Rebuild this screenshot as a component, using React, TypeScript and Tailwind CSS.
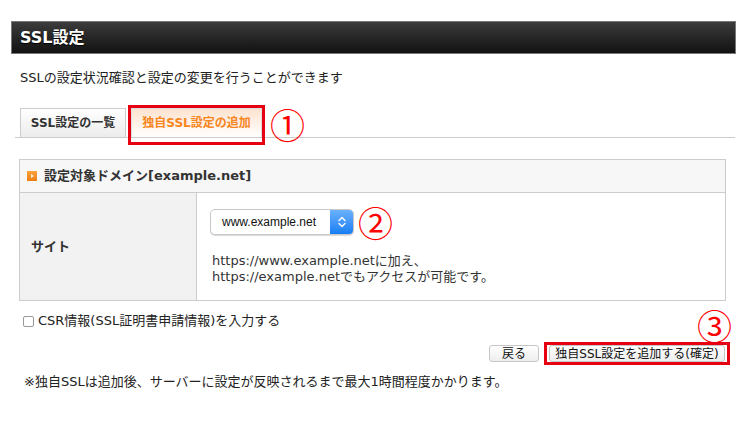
const body = "font-['DejaVu_Sans','Noto_Sans_CJK_JP',sans-serif]";
const circled = "font-['Noto_Sans_CJK_JP',sans-serif] text-[35px] font-normal leading-[32px] text-[#ff0000]";

export default function App() {
  return (
    <div className={`h-[435px] w-[750px] bg-white pt-[21px] text-[#333] ${body}`}>
      <div className="ml-[11px] flex h-[33px] w-[725px] items-center border border-[#777] bg-gradient-to-b from-[#3c3c3c] to-[#121212] pl-[8px]">
        <span className="text-[16px] font-bold text-white [text-shadow:0_1px_1px_#000]">
          SSL設定
        </span>
      </div>

      <p className="mt-[16px] pl-[20px] text-[13px] leading-[16px] text-[#222]">
        SSLの設定状況確認と設定の変更を行うことができます
      </p>

      <div className="mx-[15px] mt-[22px] flex h-[30px] items-end border-b border-[#ccc] pl-[5px]">
        <div className="flex h-[29px] w-[106px] items-center justify-center border border-b-0 border-[#ccc] bg-gradient-to-b from-white to-[#ececec] text-[12px] font-bold text-[#333]">
          SSL設定の一覧
        </div>
        <div className="relative ml-[5px] flex h-[29px] w-[131px] items-center justify-center border border-b-0 border-[#ddd] bg-gradient-to-b from-[#fde3cf] to-white text-[12px] font-bold text-[#f7861e]">
          独自SSL設定の追加
          <span className="absolute -bottom-[8px] -left-[4px] -right-[4px] -top-[4px] border-[3px] border-[#e60012]" />
        </div>
        <span className={`mb-[-2px] ml-[8px] self-center ${circled}`}>①</span>
      </div>

      <div className="ml-[19px] mt-[21px] w-[707px] border border-[#ccc]">
        <div className="flex h-[33px] items-center border-b border-[#ccc] bg-[#f7f7f7] pl-[7px]">
          <span className="mr-[7px] flex h-[10px] w-[10px] items-center justify-center bg-gradient-to-b from-[#fba33b] to-[#ef7d12]">
            <span className="ml-[1px] h-0 w-0 border-y-[2.5px] border-l-[3px] border-y-transparent border-l-[#fff3e0]" />
          </span>
          <span className="text-[13px] font-bold text-[#333]">設定対象ドメイン[example.net]</span>
        </div>
        <div className="flex h-[107px]">
          <div className="flex w-[177px] items-center border-r border-[#ccc] bg-[#f2f2f2] pl-[11px] text-[13px] font-bold">
            サイト
          </div>
          <div className="pl-[13px] pt-[13px]">
            <div className="flex items-center">
              <div className="flex h-[26px] w-[144px] overflow-hidden rounded-[5px] border border-[#c9c9c9] bg-white shadow-[0_1px_1px_rgba(0,0,0,0.15)]">
                <span className="flex flex-1 items-center pl-[11px] font-['Liberation_Sans',sans-serif] text-[12px] text-[#111]">
                  www.example.net
                </span>
                <span className="flex w-[23px] items-center justify-center bg-gradient-to-b from-[#69b1fb] to-[#127df4]">
                  <svg width="8" height="12" viewBox="0 0 8 12" fill="none" stroke="white" strokeWidth="1.4" strokeLinecap="round" strokeLinejoin="round">
                    <path d="M1 4.5 4 1.5 7 4.5" />
                    <path d="M1 7.5 4 10.5 7 7.5" />
                  </svg>
                </span>
              </div>
              <span className={`ml-[4px] ${circled}`}>②</span>
            </div>
            <p className="mt-[15px] pl-[2px] text-[13px] leading-[16px] text-[#333]">
              https://www.example.netに加え、
              <br />
              https://example.netでもアクセスが可能です。
            </p>
          </div>
        </div>
      </div>

      <div className="flex h-[40px] items-center justify-between pl-[23px] pr-[18px]">
        <label className="flex items-center text-[13px] text-[#222]">
          <span className="mr-[4px] h-[11px] w-[11px] rounded-[2px] border border-[#9a9a9a] bg-white" />
          CSR情報(SSL証明書申請情報)を入力する
        </label>
        <span className={`self-end ${circled}`}>③</span>
      </div>

      <div className="mt-[1px] flex items-center justify-end pr-[20px]">
        <button className="flex h-[17px] w-[50px] items-center justify-center rounded-[3px] border border-[#c6c6c6] bg-gradient-to-b from-white to-[#eee] text-[12px] text-[#111]">
          戻る
        </button>
        <div className="ml-[5px] border-[3px] border-[#e60012] px-[2px]">
          <button className="flex h-[17px] w-[176px] items-center justify-center rounded-[3px] border border-[#c6c6c6] bg-gradient-to-b from-white to-[#eee] text-[12px] text-[#111]">
            独自SSL設定を追加する(確定)
          </button>
        </div>
      </div>

      <p className="mt-[9px] pl-[24px] text-[13px] leading-[16px] text-[#222]">
        ※独自SSLは追加後、サーバーに設定が反映されるまで最大1時間程度かかります。
      </p>
    </div>
  );
}
